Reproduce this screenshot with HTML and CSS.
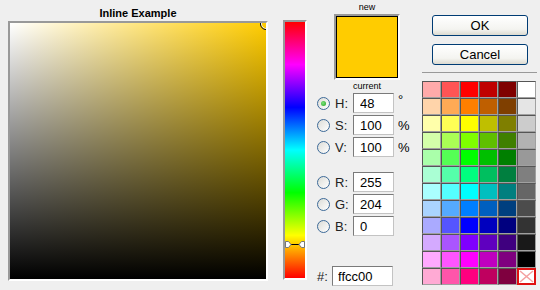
FILE: index.html
```html
<!DOCTYPE html>
<html lang="en">
<head>
    <meta charset="UTF-8">
    <title>Inline Example</title>
    <link rel="stylesheet" href="styles.css">
</head>
<body>
    <div class="picker">
        <div class="sv-col">
            <div class="title">Inline Example</div>
            <div class="sv-frame">
                <div class="sv"><span class="sv-marker"></span></div>
            </div>
        </div>

        <div class="hue-frame">
            <div class="hue"></div>
            <svg class="hue-marker" width="20" height="9" viewBox="0 0 20 9">
                <line x1="5" y1="4.5" x2="15" y2="4.5" stroke="#000" stroke-width="1"/>
                <polygon points="0.5,1.5 3.5,1.5 6,4.5 3.5,7.5 0.5,7.5" fill="#fff" stroke="#777"/>
                <polygon points="19.5,1.5 16.5,1.5 14,4.5 16.5,7.5 19.5,7.5" fill="#fff" stroke="#777"/>
            </svg>
        </div>

        <div class="fields">
            <div class="cap">new</div>
            <div class="preview"><div class="preview-color"></div></div>
            <div class="cap cap-current">current</div>

            <div class="group">
                <div class="row"><span class="radio checked"></span><label>H:</label><input class="num" type="text" value="48"><span class="unit deg">°</span></div>
                <div class="row"><span class="radio"></span><label>S:</label><input class="num" type="text" value="100"><span class="unit">%</span></div>
                <div class="row"><span class="radio"></span><label>V:</label><input class="num" type="text" value="100"><span class="unit">%</span></div>
            </div>

            <div class="group group-rgb">
                <div class="row"><span class="radio"></span><label>R:</label><input class="num" type="text" value="255"></div>
                <div class="row"><span class="radio"></span><label>G:</label><input class="num" type="text" value="204"></div>
                <div class="row"><span class="radio"></span><label>B:</label><input class="num" type="text" value="0"></div>
            </div>

            <div class="row hex-row"><label>#:</label><input class="hex" type="text" value="ffcc00"></div>
        </div>

        <div class="side">
            <button class="btn">OK</button>
            <button class="btn">Cancel</button>
            <div class="sep"></div>
            <div class="swatches" id="swatches"></div>
        </div>
    </div>

    <script>
        const colors = [
            '#ffaaaa', '#ff5555', '#ff0000', '#bf0000', '#7f0000', '#ffffff',
            '#ffd4aa', '#ffaa55', '#ff7f00', '#bf5f00', '#7f3f00', '#e5e5e5',
            '#ffffaa', '#ffff55', '#ffff00', '#bfbf00', '#7f7f00', '#cccccc',
            '#d4ffaa', '#aaff55', '#7fff00', '#5fbf00', '#3f7f00', '#b2b2b2',
            '#aaffaa', '#55ff55', '#00ff00', '#00bf00', '#007f00', '#999999',
            '#aaffd4', '#55ffaa', '#00ff7f', '#00bf5f', '#007f3f', '#7f7f7f',
            '#aaffff', '#55ffff', '#00ffff', '#00bfbf', '#007f7f', '#666666',
            '#aad4ff', '#55aaff', '#007fff', '#005fbf', '#003f7f', '#4c4c4c',
            '#aaaaff', '#5555ff', '#0000ff', '#0000bf', '#00007f', '#333333',
            '#d4aaff', '#aa55ff', '#7f00ff', '#5f00bf', '#3f007f', '#191919',
            '#ffaaff', '#ff55ff', '#ff00ff', '#bf00bf', '#7f007f', '#000000',
            '#ffaad4', '#ff55aa', '#ff007f', '#bf005f', '#7f003f', null
        ];

        let grid = document.getElementById('swatches');
        colors.forEach(c => {
            let cell = document.createElement('div');
            cell.className = 'swatch';
            if (c) {
                cell.style.background = c;
            } else {
                // transparent / no colour
                cell.classList.add('none');
                cell.innerHTML = '<svg width="15" height="13" viewBox="0 0 15 13"><line x1="1" y1="1" x2="14" y2="12" stroke="#f4a0a0" stroke-width="1.5"/><line x1="14" y1="1" x2="1" y2="12" stroke="#f4a0a0" stroke-width="1.5"/></svg>';
            }
            grid.appendChild(cell);
        });
    </script>
</body>
</html>
```

FILE: styles.css
```css
body {
    margin: 0;
    background-color: #efefef;
    font-family: "Liberation Sans", Arial, sans-serif;
    color: #000;
}
.picker {
    display: flex;
    align-items: flex-start;
}
.sv-col {
    margin-left: 8px;
    width: 260px;
}
.title {
    padding-top: 6px;
    height: 15px;
    line-height: 15px;
    font-size: 11px;
    font-weight: bold;
    text-align: center;
}
.sv-frame {
    border: 2px solid;
    border-color: #999 #fff #fff #999;
}
.sv {
    position: relative;
    width: 256px;
    height: 256px;
    overflow: hidden;
    background: linear-gradient(to top, #000, rgba(0, 0, 0, 0)),
                linear-gradient(to right, #fff, #ffcc00);
}
.sv-marker {
    position: absolute;
    left: 250px;
    top: -5px;
    width: 10px;
    height: 10px;
    border: 1px solid #000;
    border-radius: 50%;
    box-shadow: inset 0 0 0 1px #fff;
}
.hue-frame {
    position: relative;
    margin-left: 15px;
    margin-top: 20px;
    border: 2px solid;
    border-color: #999 #fff #fff #999;
}
.hue {
    width: 20px;
    height: 256px;
    background: linear-gradient(to bottom, #f00 0%, #f0f 16.67%, #00f 33.33%, #0ff 50%, #0f0 66.67%, #ff0 83.33%, #f00 100%);
}
.hue-marker {
    position: absolute;
    left: 0;
    top: 218px;
}
.fields {
    margin-left: 9px;
    width: 100px;
}
.cap {
    font-size: 9px;
    height: 14px;
    line-height: 14px;
    text-align: center;
    width: 102px;
}
.cap-current {
    height: 12px;
    line-height: 12px;
}
.preview {
    margin-left: 18px;
    width: 62px;
    border: 2px solid;
    border-color: #999 #fff #fff #999;
}
.preview-color {
    height: 60px;
    border: 1px solid #000;
    background: #ffcc00;
}
.group {
    margin-top: 1px;
    display: flex;
    flex-direction: column;
    gap: 2px;
}
.group-rgb {
    margin-top: 15px;
}
.row {
    display: flex;
    align-items: center;
    height: 20px;
    font-size: 13px;
}
.radio {
    position: relative;
    box-sizing: border-box;
    width: 13px;
    height: 13px;
    margin-left: 1px;
    border: 1px solid #3d6a98;
    border-radius: 50%;
    background: linear-gradient(135deg, #dcdcd7, #fff);
}
.radio.checked::after {
    content: "";
    position: absolute;
    left: 3px;
    top: 3px;
    width: 5px;
    height: 5px;
    border-radius: 50%;
    background: radial-gradient(circle at 40% 40%, #7be37b, #21a121);
}
.row label {
    margin-left: 5px;
    width: 18px;
    color: #222;
}
input {
    box-sizing: border-box;
    height: 20px;
    margin: 0;
    padding: 0 0 0 6px;
    border: 1px solid;
    border-color: #7a7a7a #c3c3c3 #c3c3c3 #7a7a7a;
    background: #fff;
    font-family: "Liberation Sans", Arial, sans-serif;
    font-size: 13px;
    color: #000;
}
.num {
    width: 41px;
}
.unit {
    margin-left: 4px;
}
.deg {
    align-self: flex-start;
    line-height: 14px;
}
.hex-row {
    margin-top: 30px;
}
.hex-row label {
    margin-left: 1px;
    width: 15px;
}
.hex {
    width: 61px;
    padding-left: 5px;
}
.side {
    margin-left: 6px;
    margin-top: 15px;
    width: 115px;
}
.btn {
    display: block;
    box-sizing: border-box;
    width: 96px;
    height: 21px;
    margin: 0 0 8px 10px;
    padding: 0;
    border: 1px solid #003c74;
    border-radius: 3px;
    background: linear-gradient(to bottom, #fff 0%, #f4f4f0 70%, #dcdad0 100%);
    font-family: "Liberation Sans", Arial, sans-serif;
    font-size: 13px;
    color: #000;
}
.sep {
    margin-top: -1px;
    height: 1px;
    background: #999;
}
.swatches {
    margin-top: 8px;
    display: grid;
    grid-template-columns: repeat(6, 19px);
    grid-auto-rows: 17px;
}
.swatch {
    box-sizing: border-box;
    border: 1px solid;
    border-color: #555 #a0a0a0 #a0a0a0 #555;
}
.swatch.none {
    background: #fff;
    border: 2px solid #e01010;
    display: flex;
    align-items: center;
    justify-content: center;
}
.swatch.none svg {
    display: block;
}
```
